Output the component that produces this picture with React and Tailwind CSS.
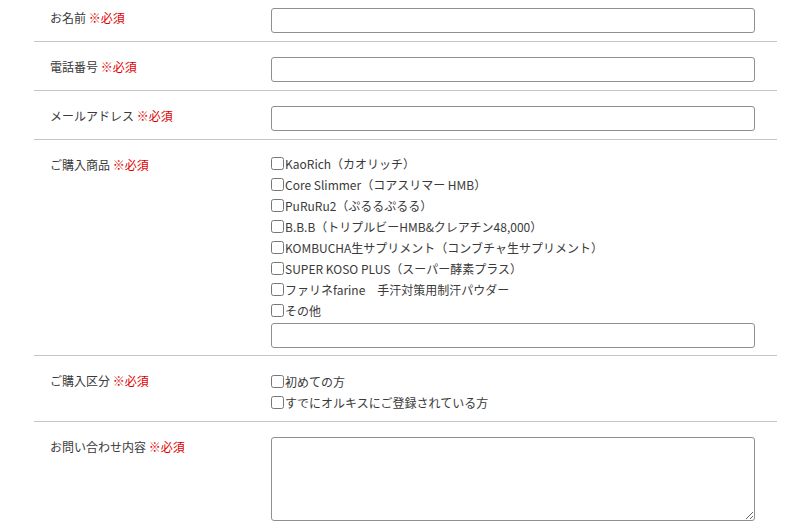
const products = [
  'KaoRich（カオリッチ）',
  'Core Slimmer（コアスリマー HMB）',
  'PuRuRu2（ぷるるぷるる）',
  'B.B.B（トリプルビーHMB&クレアチン48,000）',
  'KOMBUCHA生サプリメント（コンブチャ生サプリメント）',
  'SUPER KOSO PLUS（スーパー酵素プラス）',
  'ファリネfarine　手汗対策用制汗パウダー',
  'その他',
];

const kinds = ['初めての方', 'すでにオルキスにご登録されている方'];

const Label = ({ children }) => (
  <div className="w-[237px] shrink-0 pl-4 leading-[20px]">
    {children} <span className="text-[#e00000]">※必須</span>
  </div>
);

const Row = ({ label, first, tight, children }) => (
  <div
    className={`flex border-b border-[#c4c4c4] ${first ? 'pt-2' : 'pt-[15px]'} ${tight ? 'pb-[7px]' : 'pb-2'}`}
  >
    <Label>{label}</Label>
    <div className="w-[484px]">{children}</div>
  </div>
);

const TextInput = ({ className = '' }) => (
  <input
    type="text"
    className={`block h-[25px] w-full rounded-[3px] border border-[#8f8f8f] bg-white px-1 outline-none ${className}`}
  />
);

const Check = ({ text }) => (
  <label className="flex h-[21px] items-center">
    <input type="checkbox" className="m-0 mr-px h-[13px] w-[13px]" />
    <span>{text}</span>
  </label>
);

export default function App() {
  return (
    <div
      className="h-[528px] overflow-hidden bg-white text-[12px] text-[#3a3a3a]"
      style={{ fontFamily: '"Noto Sans CJK JP", "Noto Sans", sans-serif' }}
    >
      <div className="ml-[34px] w-[743px]">
        <Row label="お名前" first>
          <TextInput />
        </Row>
        <Row label="電話番号">
          <TextInput />
        </Row>
        <Row label="メールアドレス">
          <TextInput />
        </Row>
        <Row label="ご購入商品" tight>
          <div className="-mt-[2px]">
            {products.map((p) => (
              <Check key={p} text={p} />
            ))}
          </div>
          <TextInput className="mt-[2px]" />
        </Row>
        <Row label="ご購入区分">
          {kinds.map((k) => (
            <Check key={k} text={k} />
          ))}
        </Row>
        <Row label="お問い合わせ内容">
          <textarea className="block h-[84px] w-full rounded-[3px] border border-[#8f8f8f] bg-white p-1 outline-none" />
        </Row>
      </div>
    </div>
  );
}
